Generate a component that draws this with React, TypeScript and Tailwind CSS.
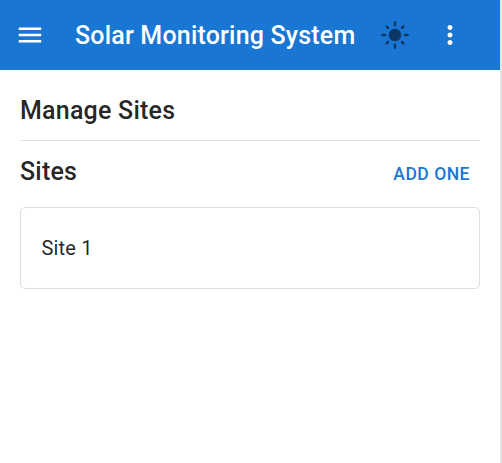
export default function App() {
  return (
    <div className="flex h-[463px] w-[502px] bg-white font-[Roboto,sans-serif] text-[rgba(0,0,0,0.87)]">
      <div className="flex w-[500px] flex-col">
        <header className="flex h-[70px] shrink-0 items-center bg-[#1976d2] pl-[15px] text-white">
          <svg className="size-[30px]" viewBox="0 0 24 24" fill="currentColor">
            <path d="M3 18h18v-2H3v2zm0-5h18v-2H3v2zm0-7v2h18V6H3z" />
          </svg>
          <h1 className="ml-[30px] w-[305px] whitespace-nowrap pt-[2px] text-[25px] font-medium leading-[40px] tracking-[0.19px]">Solar Monitoring System</h1>
          <svg className="size-[30px] text-[#0b3763]" viewBox="0 0 24 24" fill="currentColor">
            <path d="M12 7c-2.76 0-5 2.24-5 5s2.24 5 5 5 5-2.24 5-5-2.24-5-5-5zM2 13h2c.55 0 1-.45 1-1s-.45-1-1-1H2c-.55 0-1 .45-1 1s.45 1 1 1zm18 0h2c.55 0 1-.45 1-1s-.45-1-1-1h-2c-.55 0-1 .45-1 1s.45 1 1 1zM11 2v2c0 .55.45 1 1 1s1-.45 1-1V2c0-.55-.45-1-1-1s-1 .45-1 1zm0 18v2c0 .55.45 1 1 1s1-.45 1-1v-2c0-.55-.45-1-1-1s-1 .45-1 1zM5.99 4.58c-.39-.39-1.03-.39-1.41 0-.39.39-.39 1.03 0 1.41l1.06 1.06c.39.39 1.03.39 1.41 0s.39-1.03 0-1.41L5.99 4.58zm12.37 12.37c-.39-.39-1.03-.39-1.41 0-.39.39-.39 1.03 0 1.41l1.06 1.06c.39.39 1.03.39 1.41 0 .39-.39.39-1.03 0-1.41l-1.06-1.06zm1.06-10.96c.39-.39.39-1.03 0-1.41-.39-.39-1.03-.39-1.41 0l-1.06 1.06c-.39.39-.39 1.03 0 1.41s1.03.39 1.41 0l1.06-1.06zM7.05 18.36c.39-.39.39-1.03 0-1.41-.39-.39-1.03-.39-1.41 0l-1.06 1.06c-.39.39-.39 1.03 0 1.41s1.03.39 1.41 0l1.06-1.06z" />
          </svg>
          <svg className="ml-[25px] size-[30px]" viewBox="0 0 24 24" fill="currentColor">
            <path d="M12 8c1.1 0 2-.9 2-2s-.9-2-2-2-2 .9-2 2 .9 2 2 2zm0 2c-1.1 0-2 .9-2 2s.9 2 2 2 2-.9 2-2-.9-2-2-2zm0 6c-1.1 0-2 .9-2 2s.9 2 2 2 2-.9 2-2-.9-2-2-2z" />
          </svg>
        </header>
        <main className="px-5 pt-5">
          <h2 className="h-[50px] text-[25px] font-medium leading-[42px] tracking-[0.22px]">Manage Sites</h2>
          <hr className="border-[#e0e0e0]" />
          <div className="flex h-[66px] justify-between">
            <h2 className="pt-[11px] text-[25px] font-medium leading-[40px] tracking-[0.22px]">Sites</h2>
            <button className="mt-[11px] h-[45px] px-[10px] text-[17.5px] font-medium tracking-[0.5px] text-[#1976d2]">ADD ONE</button>
          </div>
          <section className="flex h-[82px] items-center rounded-[5px] border border-[#e0e0e0] pl-[20.4px] pr-5 text-[20px] tracking-[0.19px]">Site 1</section>
        </main>
      </div>
      <div className="w-[2px] bg-[#e5e5e5]" />
    </div>
  );
}
